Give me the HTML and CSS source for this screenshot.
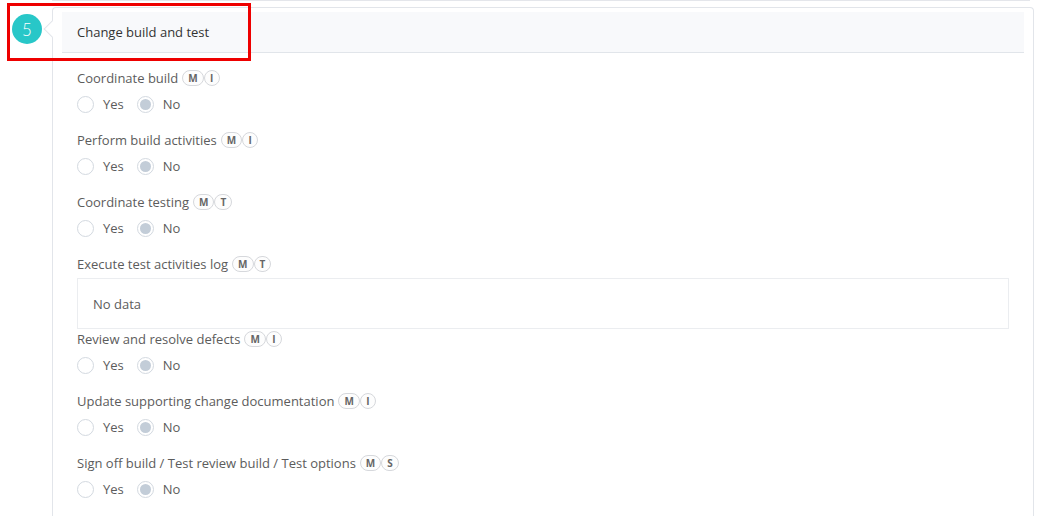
FILE: index.html
```html
<!DOCTYPE html>
<html lang="en">
<head>
<meta charset="utf-8">
<title>Change build and test</title>
<link rel="stylesheet" href="styles.css">
</head>
<body>
<div class="page">
  <div class="prev-card"></div>
  <div class="step">
    <div class="marker"><span class="step-num">5</span></div>
    <div class="card">
      <span class="pointer"></span>
      <div class="card-header">Change build and test</div>
      <div class="card-body">
        <div class="field">
          <div class="label">Coordinate build <span class="badges"><span class="badge">M</span><span class="badge">I</span></span></div>
          <div class="radios">
            <span class="radio"><span class="dot"></span>Yes</span>
            <span class="radio checked"><span class="dot"></span>No</span>
          </div>
        </div>
        <div class="field">
          <div class="label">Perform build activities <span class="badges"><span class="badge">M</span><span class="badge">I</span></span></div>
          <div class="radios">
            <span class="radio"><span class="dot"></span>Yes</span>
            <span class="radio checked"><span class="dot"></span>No</span>
          </div>
        </div>
        <div class="field">
          <div class="label">Coordinate testing <span class="badges"><span class="badge">M</span><span class="badge">T</span></span></div>
          <div class="radios">
            <span class="radio"><span class="dot"></span>Yes</span>
            <span class="radio checked"><span class="dot"></span>No</span>
          </div>
        </div>
        <div class="field field-log">
          <div class="label">Execute test activities log <span class="badges"><span class="badge">M</span><span class="badge">T</span></span></div>
          <div class="empty-box">No data</div>
        </div>
        <div class="field">
          <div class="label">Review and resolve defects <span class="badges"><span class="badge">M</span><span class="badge">I</span></span></div>
          <div class="radios">
            <span class="radio"><span class="dot"></span>Yes</span>
            <span class="radio checked"><span class="dot"></span>No</span>
          </div>
        </div>
        <div class="field">
          <div class="label">Update supporting change documentation <span class="badges"><span class="badge">M</span><span class="badge">I</span></span></div>
          <div class="radios">
            <span class="radio"><span class="dot"></span>Yes</span>
            <span class="radio checked"><span class="dot"></span>No</span>
          </div>
        </div>
        <div class="field">
          <div class="label">Sign off build / Test review build / Test options <span class="badges"><span class="badge">M</span><span class="badge">S</span></span></div>
          <div class="radios">
            <span class="radio"><span class="dot"></span>Yes</span>
            <span class="radio checked"><span class="dot"></span>No</span>
          </div>
        </div>
      </div>
    </div>
  </div>
  <div class="highlight"></div>
</div>
</body>
</html>
```

FILE: styles.css
```css
* { box-sizing: border-box; }
html, body {
  margin: 0;
  padding: 0;
  background: #fff;
  overflow: hidden;
}
body {
  font-family: "Open Sans", "Liberation Sans", sans-serif;
  font-size: 13px;
  color: #5c5c5c;
}
.page {
  position: relative;
  width: 1048px;
  height: 516px;
  overflow: hidden;
}
.prev-card {
  height: 1px;
  margin: 0 18px 0 52px;
  background: #e4e6eb;
}
.step {
  display: flex;
  margin-top: 6px;
}
.marker {
  width: 52px;
  flex: none;
  padding: 7px 0 0 12px;
}
.step-num {
  display: flex;
  align-items: center;
  justify-content: center;
  width: 30px;
  height: 30px;
  border-radius: 50%;
  background: #28c7c8;
  color: #fff;
  font-family: "Lato", "Open Sans", sans-serif;
  font-weight: 300;
  font-size: 17px;
  line-height: 1;
}
.card {
  position: relative;
  flex: 1;
  margin-right: 14px;
  border: 1px solid #e2e5ea;
  border-bottom: none;
  border-radius: 4px 4px 0 0;
  padding: 4px 9px 40px 9px;
}
.pointer {
  position: absolute;
  left: -7px;
  top: 15px;
  width: 12px;
  height: 12px;
  background: #fff;
  border-left: 1px solid #e2e5ea;
  border-bottom: 1px solid #e2e5ea;
  transform: rotate(45deg);
}
.card-header {
  height: 41px;
  display: flex;
  align-items: center;
  padding-left: 15px;
  background: #f8f9fb;
  border-bottom: 1px solid #e1e5ea;
  color: #333;
  font-size: 13px;
}
.card-body {
  padding: 15px 15px 0 15px;
}
.field {
  margin-bottom: 16px;
}
.field-log {
  margin-bottom: 0;
}
.label {
  display: flex;
  align-items: center;
  height: 20px;
  line-height: 20px;
  white-space: nowrap;
}
.badges {
  display: inline-flex;
  margin-left: 4px;
}
.badge {
  display: inline-flex;
  align-items: center;
  justify-content: center;
  min-width: 16px;
  height: 16px;
  padding: 0 5px;
  border: 1px solid #d6d8dc;
  border-radius: 8px;
  background: #fdfdfd;
  color: #666;
  font-size: 10px;
  font-weight: 700;
  line-height: 1;
}
.radios {
  display: flex;
  align-items: center;
  gap: 13px;
  height: 20px;
  margin-top: 6px;
}
.radio {
  display: inline-flex;
  align-items: center;
  gap: 9px;
  line-height: 20px;
}
.dot {
  position: relative;
  width: 17px;
  height: 17px;
  border-radius: 50%;
  border: 1px solid #d3d9e0;
  background: #fff;
}
.radio.checked .dot::after {
  content: "";
  position: absolute;
  left: 2px;
  top: 2px;
  width: 11px;
  height: 11px;
  border-radius: 50%;
  background: #c3cdd8;
}
.empty-box {
  margin-top: 4px;
  height: 51px;
  border: 1px solid #ebedf0;
  display: flex;
  align-items: center;
  padding-left: 15px;
}
.highlight {
  position: absolute;
  left: 7px;
  top: 3px;
  width: 244px;
  height: 58px;
  border: 3px solid #ee0000;
}
```
